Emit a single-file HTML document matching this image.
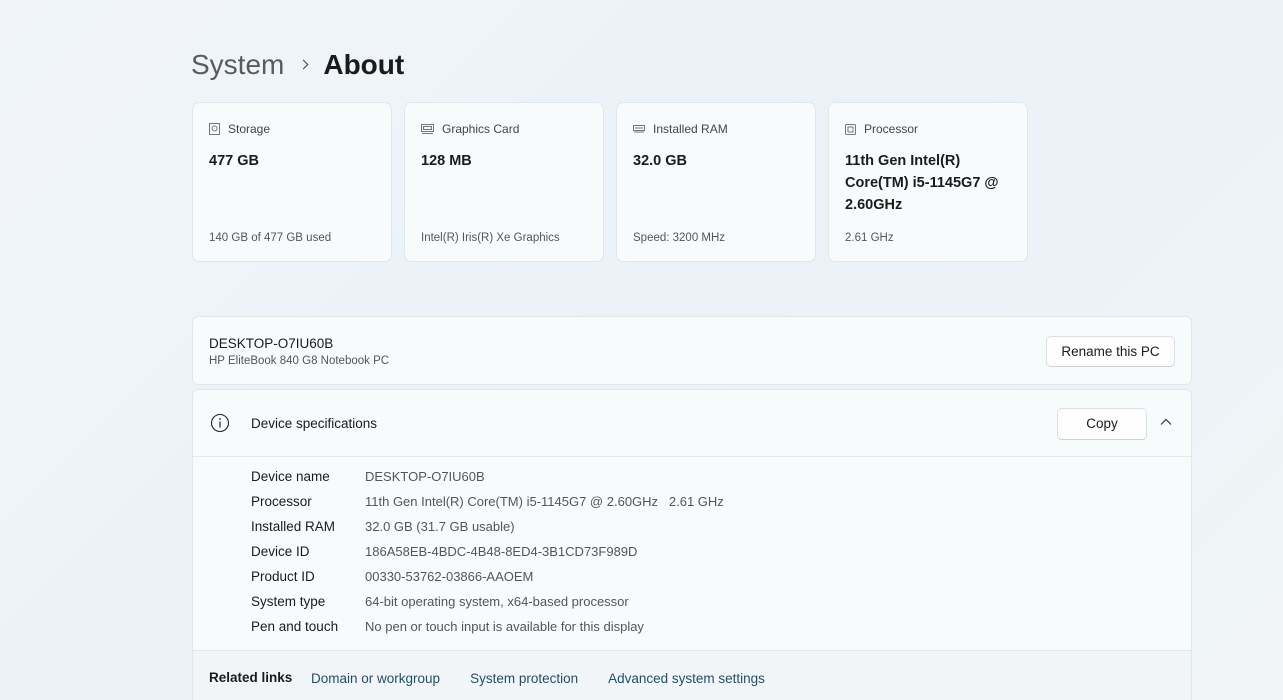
<!DOCTYPE html><html><head><style>
*{margin:0;padding:0;box-sizing:border-box}
html,body{width:1283px;height:700px;overflow:hidden}
body{background:linear-gradient(135deg,#f1f5f9 0%,#eaf2f8 50%,#f0f4f6 100%);font-family:"Liberation Sans",sans-serif;color:#1b1b1b;position:relative}
.t{position:absolute;top:49px;left:191px;font-size:28px;font-weight:600;white-space:nowrap}
.t .s{color:#5b5b5b;font-weight:400}
.t .c{display:inline-block;width:7px;height:7px;border-top:1.6px solid #444;border-right:1.6px solid #444;transform:rotate(45deg);margin:0 16px 0 16px;position:relative;top:-6px}
.card{position:absolute;top:102px;width:200px;height:160px;background:#f8fbfc;border:1px solid #e1e6ea;border-radius:7px}
.card .h{position:absolute;left:16px;top:19px;font-size:12px;color:#444;display:flex;align-items:center}
.card .h svg{margin-right:8px}
.card .v{position:absolute;left:16px;top:47px;font-size:14.5px;font-weight:700;line-height:22px;width:175px}
.card .f{position:absolute;left:16px;top:129px;font-size:11.5px;color:#555}
.p{position:absolute;left:192px;width:1000px;background:#f8fbfc;border:1px solid #e1e6ea;border-radius:6px}
.btn{position:absolute;background:#fefefe;border:1px solid #dcdfe2;border-bottom-color:#cfd2d5;border-radius:5px;font-size:13.5px;text-align:center}
.row{position:absolute;left:58px;font-size:13.5px}
.row span{position:absolute;left:114px;white-space:nowrap;color:#555;font-size:13px}
.row b{font-weight:400;white-space:nowrap}
</style></head><body>
<div class="t"><span class="s">System</span><span class="c"></span>About</div>

<div class="card" style="left:192px"><div class="h"><svg width="11" height="12" viewBox="0 0 11 12"><rect x=".5" y=".5" width="10" height="11" fill="none" stroke="#777"/><circle cx="5.5" cy="5.5" r="2.5" fill="none" stroke="#777"/></svg>Storage</div><div class="v">477 GB</div><div class="f">140 GB of 477 GB used</div></div>
<div class="card" style="left:404px"><div class="h"><svg width="13" height="10" viewBox="0 0 13 10"><rect x=".5" y=".5" width="12" height="7" fill="none" stroke="#777"/><rect x="2.5" y="2.5" width="8" height="3" fill="none" stroke="#777"/><line x1="1" y1="9.5" x2="12" y2="9.5" stroke="#777"/></svg>Graphics Card</div><div class="v">128 MB</div><div class="f">Intel(R) Iris(R) Xe Graphics</div></div>
<div class="card" style="left:616px"><div class="h"><svg width="12" height="8" viewBox="0 0 12 8"><rect x=".5" y=".5" width="11" height="5" fill="none" stroke="#777"/><path d="M3 2v2M5 2v2M7 2v2M9 2v2M1 7h10" stroke="#777"/></svg>Installed RAM</div><div class="v">32.0 GB</div><div class="f">Speed: 3200 MHz</div></div>
<div class="card" style="left:828px"><div class="h"><svg width="11" height="11" viewBox="0 0 11 11"><rect x=".5" y=".5" width="10" height="10" rx="1" fill="none" stroke="#777"/><rect x="3" y="3" width="5" height="5" fill="none" stroke="#777"/></svg>Processor</div><div class="v">11th Gen Intel(R) Core(TM) i5-1145G7 @ 2.60GHz</div><div class="f">2.61 GHz</div></div>

<div class="p" style="top:316px;height:69px">
<div style="position:absolute;left:16px;top:19px;font-size:13.5px">DESKTOP-O7IU60B</div>
<div style="position:absolute;left:16px;top:38px;font-size:11.5px;color:#555">HP EliteBook 840 G8 Notebook PC</div>
<div class="btn" style="left:853px;top:19px;width:129px;height:31px;line-height:29px">Rename this PC</div>
</div>

<div class="p" style="top:389px;height:320px;overflow:hidden">
<svg style="position:absolute;left:17px;top:23px" width="20" height="20" viewBox="0 0 20 20"><circle cx="10" cy="10" r="8.5" fill="none" stroke="#222" stroke-width="1.1"/><line x1="10" y1="8.5" x2="10" y2="14.5" stroke="#222" stroke-width="1.2"/><circle cx="10" cy="6" r=".9" fill="#222"/></svg>
<div style="position:absolute;left:58px;top:26px;font-size:13.5px">Device specifications</div>
<div class="btn" style="left:864px;top:18px;width:90px;height:32px;line-height:30px">Copy</div>
<svg style="position:absolute;left:967px;top:28px" width="12" height="8" viewBox="0 0 12 8"><path d="M1 6.5L6 1.5 11 6.5" fill="none" stroke="#333" stroke-width="1.2"/></svg>
<div style="position:absolute;left:0;top:66px;width:100%;border-top:1px solid #e4e9ec"></div>
<div class="row" style="top:79px"><b>Device name</b><span>DESKTOP-O7IU60B</span></div>
<div class="row" style="top:104px"><b>Processor</b><span>11th Gen Intel(R) Core(TM) i5-1145G7 @ 2.60GHz&nbsp;&nbsp; 2.61 GHz</span></div>
<div class="row" style="top:129px"><b>Installed RAM</b><span>32.0 GB (31.7 GB usable)</span></div>
<div class="row" style="top:154px"><b>Device ID</b><span>186A58EB-4BDC-4B48-8ED4-3B1CD73F989D</span></div>
<div class="row" style="top:179px"><b>Product ID</b><span>00330-53762-03866-AAOEM</span></div>
<div class="row" style="top:204px"><b>System type</b><span>64-bit operating system, x64-based processor</span></div>
<div class="row" style="top:229px"><b>Pen and touch</b><span>No pen or touch input is available for this display</span></div>
<div style="position:absolute;left:0;top:260px;width:100%;height:60px;background:#f1f5f7;border-top:1px solid #e1e7ea">
<div style="position:absolute;left:16px;top:19px;font-size:13.5px;font-weight:600">Related links</div>
<div style="position:absolute;left:118px;top:20px;font-size:13.5px;color:#1f4f6e;white-space:nowrap">Domain or workgroup<span style="margin-left:30px">System protection</span><span style="margin-left:30px">Advanced system settings</span></div>
</div>
</div>
</body></html>
